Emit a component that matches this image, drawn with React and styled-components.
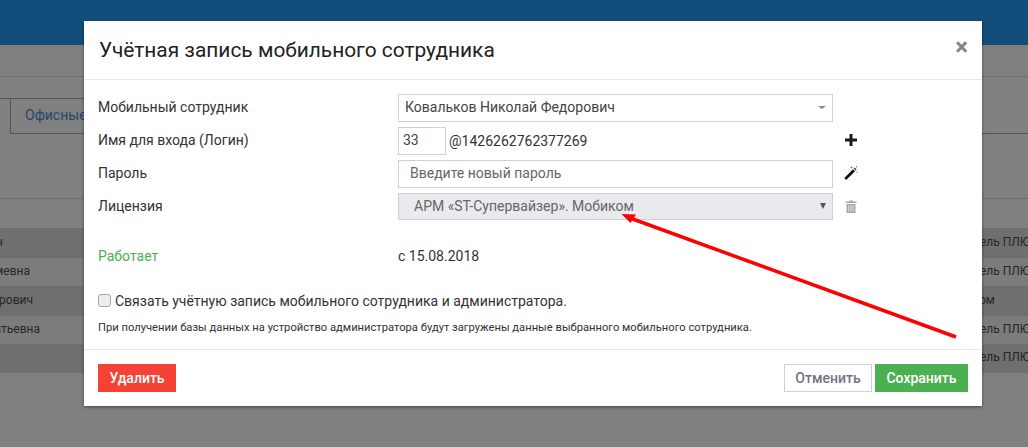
import React from "react";
import styled, { createGlobalStyle } from "styled-components";

const GlobalStyle = createGlobalStyle`
  html, body { margin: 0; padding: 0; height: 100%; overflow: hidden; }
  body { font-family: Roboto, "Liberation Sans", sans-serif; font-size: 14px; color: #333; background: #808080; }
`;

const Page = styled.div`
  position: relative;
  width: 1028px;
  height: 447px;
  overflow: hidden;
  background: #808080;
`;

const TopBar = styled.div`
  height: 45px;
  background: #124d7b;
`;

const SubBar = styled.div`
  height: 31px;
  border-bottom: 1px solid #707070;
`;

const Tabs = styled.div`
  display: flex;
  height: 36px;
  margin-top: 21px;
`;

const TabGap = styled.div`
  width: 10px;
  border-top: 1px solid #555;
`;

const TabRest = styled.div`
  flex: 1;
  border-bottom: 1px solid #555;
`;

const Tab = styled.div`
  width: 120px;
  box-sizing: border-box;
  padding: 0 14px;
  border: 1px solid #555;
  font-size: 14px;
  line-height: 33px;
  color: #26466c;
`;

const TableTop = styled.div`
  height: 64px;
  border-bottom: 1px solid #6c6c6c;
`;

const Spacer = styled.div`
  height: 29px;
`;

const TableRow = styled.div`
  display: flex;
  justify-content: space-between;
  height: ${(p) => p.$h}px;
  line-height: ${(p) => p.$h - 2}px;
  font-size: 12px;
  background: ${(p) => (p.$dark ? "#6f6f6f" : "#7c7c7c")};
  color: #262626;
  white-space: nowrap;
`;

const LeftCell = styled.span`
  display: flex;
  justify-content: flex-end;
  width: ${(p) => p.$end}px;
`;

const RightCell = styled.span`
  width: ${(p) => p.$w}px;
  overflow: hidden;
`;

const Modal = styled.div`
  position: absolute;
  left: 84px;
  top: 21px;
  width: 898px;
  height: 385px;
  box-sizing: border-box;
  background: #fff;
  box-shadow: 0 1px 3px rgba(0, 0, 0, 0.45);
  display: flex;
  flex-direction: column;
`;

const ModalHeader = styled.div`
  height: 59px;
  box-sizing: border-box;
  padding: 0 14px 0 15px;
  border-bottom: 1px solid #e8e8e8;
  display: flex;
  align-items: center;
  justify-content: space-between;
`;

const Title = styled.h4`
  margin: 0;
  font-size: 20.9px;
  font-weight: 400;
  color: #222;
`;

const Close = styled.span`
  font-size: 24px;
  font-weight: 700;
  line-height: 1;
  color: #858585;
  margin-bottom: 7px;
`;

const ModalBody = styled.div`
  flex: 1;
  padding: 14px 14px 0;
`;

const FormGrid = styled.div`
  display: grid;
  grid-template-columns: 300px 435px 26px;
  grid-auto-rows: 28px;
  row-gap: 5px;
  align-items: center;
`;

const Label = styled.label`
  color: #333;
  padding-bottom: 2px;
`;

const Control = styled.div`
  align-self: start;
  height: ${(p) => p.$h || 28}px;
  box-sizing: border-box;
  border: 1px solid #ccd0d9;
  background: ${(p) => (p.$disabled ? "#e8eaed" : "#fff")};
  color: ${(p) => (p.$muted ? "#666" : "#444")};
  display: flex;
  align-items: center;
  justify-content: space-between;
  padding: 0 ${(p) => (p.$pad ? p.$pad : 6)}px 2px;
  white-space: nowrap;
`;

const Caret = styled.span`
  width: 0;
  height: 0;
  border-left: ${(p) => p.$size}px solid transparent;
  border-right: ${(p) => p.$size}px solid transparent;
  border-top: ${(p) => p.$tall}px solid ${(p) => p.$color};
  margin-right: ${(p) => p.$mr}px;
`;

const LoginCell = styled.div`
  display: flex;
  align-items: center;
  gap: 3px;
  padding-bottom: 1px;
`;

const ShortInput = styled.div`
  width: 48px;
  height: 28px;
  box-sizing: border-box;
  border: 1px solid #ccd0d9;
  padding: 0 4px;
  line-height: 25px;
  color: #444;
  margin-bottom: -1px;
`;

const IconCell = styled.div`
  display: flex;
  justify-content: center;
  padding-left: 11px;
  width: 14px;
  padding-bottom: 2px;
`;

const StatusRow = styled.div`
  display: grid;
  grid-template-columns: 300px 1fr;
  margin-top: 25px;
  line-height: 20px;
`;

const Status = styled.span`
  color: #4caf50;
`;

const CheckRow = styled.div`
  display: flex;
  align-items: center;
  gap: 4px;
  margin-top: 25px;
  line-height: 20px;
  color: #333;
`;

const CheckBox = styled.span`
  width: 11px;
  height: 11px;
  border: 1px solid #a5a5a5;
  border-radius: 3px;
  background: #eeeeee;
  margin-top: -2px;
`;

const Hint = styled.p`
  margin: 9px 0 0;
  font-size: 11.2px;
  line-height: 16px;
  color: #333;
`;

const ModalFooter = styled.div`
  height: 57px;
  box-sizing: border-box;
  border-top: 1px solid #e8e8e8;
  padding: 14px;
  display: flex;
  gap: 3px;
`;

const FooterButton = styled.div`
  height: 28px;
  box-sizing: border-box;
  width: ${(p) => p.$w}px;
  text-align: center;
  line-height: ${(p) => (p.$outline ? 26 : 28)}px;
  font-weight: 500;
  color: ${(p) => (p.$outline ? "#6f7680" : "#fff")};
  background: ${(p) => p.$bg || "#fff"};
  border: ${(p) => (p.$outline ? "1px solid #ccd0d9" : "none")};
  ${(p) => p.$push && "margin-left: auto;"}
`;

const Arrow = styled.svg`
  position: absolute;
  left: 0;
  top: 0;
  pointer-events: none;
`;

const PlusIcon = () => (
  <svg width="12" height="12" viewBox="0 0 12 12">
    <path d="M4.5 0h3v4.5H12v3H7.5V12h-3V7.5H0v-3h4.5z" fill="#1b1b1b" />
  </svg>
);

const WandIcon = () => (
  <svg width="14" height="14" viewBox="0 0 14 14">
    <path d="M0.3 12L9 3.2l2 2L2.2 14z" fill="#111" />
    <path d="M9.6 2.6L10.8 1.6l1.8 1.8-1.1 1.2z" fill="#444" />
    <path d="M7.5 0.5v2M6.5 1.5h2M12.5 0v1.5M13 5.5v1.5" stroke="#777" strokeWidth="0.9" />
  </svg>
);

const TrashIcon = () => (
  <svg width="12" height="13" viewBox="0 0 12 13">
    <path d="M4 1.5V.5h4v1h3.5v1.5H.5V1.5z" fill="#a9a9a9" />
    <path d="M1.5 4h9v9h-9z" fill="#a9a9a9" />
    <path d="M3.2 5.2v6.4h1.2V5.2zM5.4 5.2v6.4h1.2V5.2zM7.6 5.2v6.4h1.2V5.2z" fill="#dcd6d0" />
  </svg>
);

const rows = [
  { h: 30, dark: true, end: 3, left: "н", right: "ель ПЛЮС", rw: 48 },
  { h: 28, dark: false, end: 30, left: "имевна", right: "ель ПЛЮС", rw: 48 },
  { h: 30, dark: true, end: 33, left: "рович", right: "ом", rw: 49 },
  { h: 28, dark: false, end: 40, left: "атьевна", right: "ель ПЛЮС", rw: 48 },
  { h: 29, dark: true, end: 3, left: "", right: "ель ПЛЮС", rw: 48 },
];

export default function App() {
  return (
    <Page>
      <GlobalStyle />
      <TopBar />
      <SubBar />
      <Tabs>
        <TabGap />
        <Tab>Офисные</Tab>
        <TabRest />
      </Tabs>
      <TableTop />
      <Spacer />
      {rows.map((row, i) => (
        <TableRow key={i} $h={row.h} $dark={row.dark}>
          <LeftCell $end={row.end}>{row.left}</LeftCell>
          <RightCell $w={row.rw}>{row.right}</RightCell>
        </TableRow>
      ))}

      <Modal>
        <ModalHeader>
          <Title>Учётная запись мобильного сотрудника</Title>
          <Close>×</Close>
        </ModalHeader>
        <ModalBody>
          <FormGrid>
            <Label>Мобильный сотрудник</Label>
            <Control>
              Ковальков Николай Федорович
              <Caret $size={4} $tall={3} $color="#888" $mr={0} />
            </Control>
            <span />

            <Label>Имя для входа (Логин)</Label>
            <LoginCell>
              <ShortInput>33</ShortInput>
              @1426262762377269
            </LoginCell>
            <IconCell>
              <PlusIcon />
            </IconCell>

            <Label>Пароль</Label>
            <Control $muted $pad={11}>Введите новый пароль</Control>
            <IconCell>
              <WandIcon />
            </IconCell>

            <Label>Лицензия</Label>
            <Control $disabled $muted $pad={15} $h={27}>
              АРМ «ST-Супервайзер». Мобиком
              <Caret $size={3} $tall={6} $color="#555" $mr={-9} />
            </Control>
            <IconCell>
              <TrashIcon />
            </IconCell>
          </FormGrid>

          <StatusRow>
            <Status>Работает</Status>
            <span>с 15.08.2018</span>
          </StatusRow>

          <CheckRow>
            <CheckBox />
            Связать учётную запись мобильного сотрудника и администратора.
          </CheckRow>
          <Hint>При получении базы данных на устройство администратора будут загружены данные выбранного мобильного сотрудника.</Hint>
        </ModalBody>
        <ModalFooter>
          <FooterButton $w={78} $bg="#f44336">Удалить</FooterButton>
          <FooterButton $w={88} $outline $push>Отменить</FooterButton>
          <FooterButton $w={93} $bg="#4caf50">Сохранить</FooterButton>
        </ModalFooter>
      </Modal>

      <Arrow width="1028" height="447" viewBox="0 0 1028 447">
        <path d="M956 337L630 218" stroke="#ff0000" strokeWidth="3.5" fill="none" />
        <path d="M621.5 214L636 214.5L630.5 223z" fill="#ff0000" />
      </Arrow>
    </Page>
  );
}
